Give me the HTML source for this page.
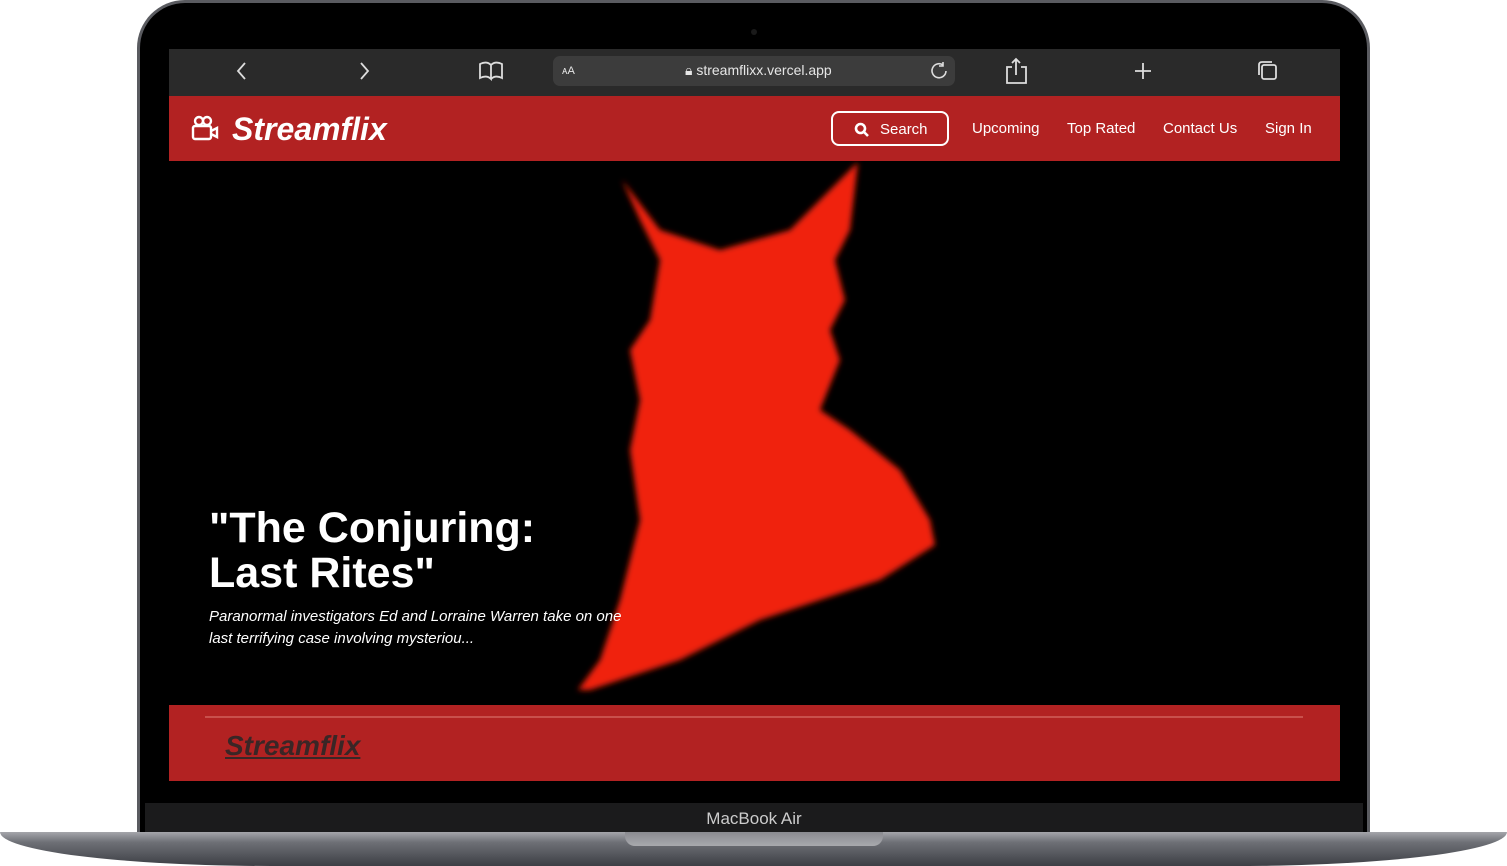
<!DOCTYPE html>
<html><head><style>
*{margin:0;padding:0;box-sizing:border-box}
body{width:1507px;height:866px;background:#fff;position:relative;overflow:hidden;font-family:"Liberation Sans",sans-serif}
.frame{position:absolute;left:137px;top:0;width:1233px;height:840px;border-radius:48px 48px 0 0;background:#000;border:3px solid #5a5b60;border-bottom:none}
.screen{position:absolute;left:169px;top:49px;width:1171px;height:732px;background:#000;overflow:hidden}
.tb{position:absolute;left:0;top:0;width:1171px;height:47px;background:#2a2a2a;color:#ddd}
.url{position:absolute;left:384px;top:7px;width:402px;height:30px;background:#3c3c3c;border-radius:7px;font-size:14px;color:#e6e6e6}
.nav{position:absolute;left:0;top:47px;width:1171px;height:65px;background:#b22222;color:#fff}
.logo{position:absolute;left:63px;top:15px;font-size:32px;font-weight:bold;font-style:italic}
.sbtn{position:absolute;left:662px;top:15px;width:118px;height:35px;border:2px solid #fff;border-radius:8px;font-size:15px}
.nl{position:absolute;top:24px;font-size:15px}
.hero h1{position:absolute;left:40px;top:457px;font-size:43px;line-height:45px;color:#fff;font-weight:bold}
.hero p{position:absolute;left:40px;top:557px;font-size:15px;line-height:22px;font-style:italic;color:#fff;width:420px}
.foot{position:absolute;left:0;top:656px;width:1171px;height:76px;background:#b22222}
.foot .ln{position:absolute;left:36px;top:11px;width:1098px;height:2px;background:#c9504c}
.foot .t{position:absolute;left:56px;top:25px;font-size:28px;font-weight:bold;font-style:italic;color:#3a2626;text-decoration:underline}
.chin{position:absolute;left:145px;top:803px;width:1218px;height:32px;background:#1b1b1c;color:#ccc;font-size:17px;text-align:center;line-height:32px}
.base{position:absolute;left:0;top:832px;width:1507px;height:34px;background:linear-gradient(#a5a6ab,#6e7076 30%,#3d3f45);border-radius:0 0 18% 18%/0 0 100% 100%}
.notch{position:absolute;left:625px;top:832px;width:258px;height:14px;background:linear-gradient(#8a8b90,#a8a9ad);border-radius:0 0 10px 10px}
</style></head><body>
<div class="frame"></div>
<div style="position:absolute;left:751px;top:29px;width:6px;height:6px;border-radius:3px;background:#1a1a1a"></div>
<div class="screen">
 <div class="tb">
  <svg width="1171" height="47" style="position:absolute;left:0;top:0" fill="none" stroke="#ddd" stroke-width="1.8">
   <path d="M76 14l-7 8 7 8"/><path d="M192 14l7 8-7 8"/>
   <path d="M311 15c4-2 8-2 11 1v14c-3-3-7-3-11-1zM322 16c3-3 7-3 11-1v14c-4-2-8-2-11 1"/>
   <path d="M843 18h-5v16h19v-16h-5M847 26v-16M843 14l4-4 4 4"/>
   <path d="M966 22h16M974 14v16"/>
   <rect x="1093" y="16" width="14" height="14" rx="2"/><path d="M1090 26v-10c0-2 1-3 3-3h10"/>
  </svg>
  <div class="url"><span style="position:absolute;left:9px;top:9px;font-size:11px">ᴀA</span>
   <span style="position:absolute;left:132px;top:6px">🔒︎ streamflixx.vercel.app</span>
   <svg width="20" height="20" style="position:absolute;left:377px;top:5px" fill="none" stroke="#ddd" stroke-width="1.6"><path d="M13 4a7 7 0 1 0 3 6M13 1v4h-4"/></svg></div>
 </div>
 <div class="nav">
  <svg width="30" height="28" style="position:absolute;left:22px;top:19px" fill="none" stroke="#fff" stroke-width="2.4"><circle cx="8" cy="6" r="4"/><circle cx="16" cy="6" r="4"/><rect x="2" y="11" width="18" height="13" rx="2"/><path d="M20 16l6-3v9l-6-3"/></svg>
  <div class="logo">Streamflix</div>
  <div class="sbtn"><svg width="16" height="16" style="position:absolute;left:21px;top:9px" fill="none" stroke="#fff" stroke-width="2.6"><circle cx="6.5" cy="6.5" r="4.5"/><path d="M10 10l4 4"/></svg><span style="position:absolute;left:47px;top:8px">Search</span></div>
  <div class="nl" style="left:803px">Upcoming</div>
  <div class="nl" style="left:898px">Top Rated</div>
  <div class="nl" style="left:994px">Contact Us</div>
  <div class="nl" style="left:1096px">Sign In</div>
 </div>
 <div class="hero">
  <svg width="1171" height="545" style="position:absolute;left:0;top:112px">
   <defs><filter id="b"><feGaussianBlur stdDeviation="3"/></filter></defs>
   <path filter="url(#b)" fill="#f0200f" transform="translate(-169,-161)" d="M622 180L660 230 720 250 790 230 830 190 858 162 850 230 835 260 845 300 830 330 840 360 820 410 850 430 900 470 930 520 935 545 880 580 760 620 680 660 590 690 578 690 600 660 620 600 640 520 630 450 640 400 630 350 650 320 660 260 640 220z"/>
  </svg>
  <h1>"The Conjuring:<br>Last Rites"</h1>
  <p>Paranormal investigators Ed and Lorraine Warren take on one last terrifying case involving mysteriou...</p>
 </div>
 <div class="foot"><div class="ln"></div><div class="t">Streamflix</div></div>
</div>
<div class="chin">MacBook Air</div>
<div class="base"></div>
<div class="notch"></div>
</body></html>
